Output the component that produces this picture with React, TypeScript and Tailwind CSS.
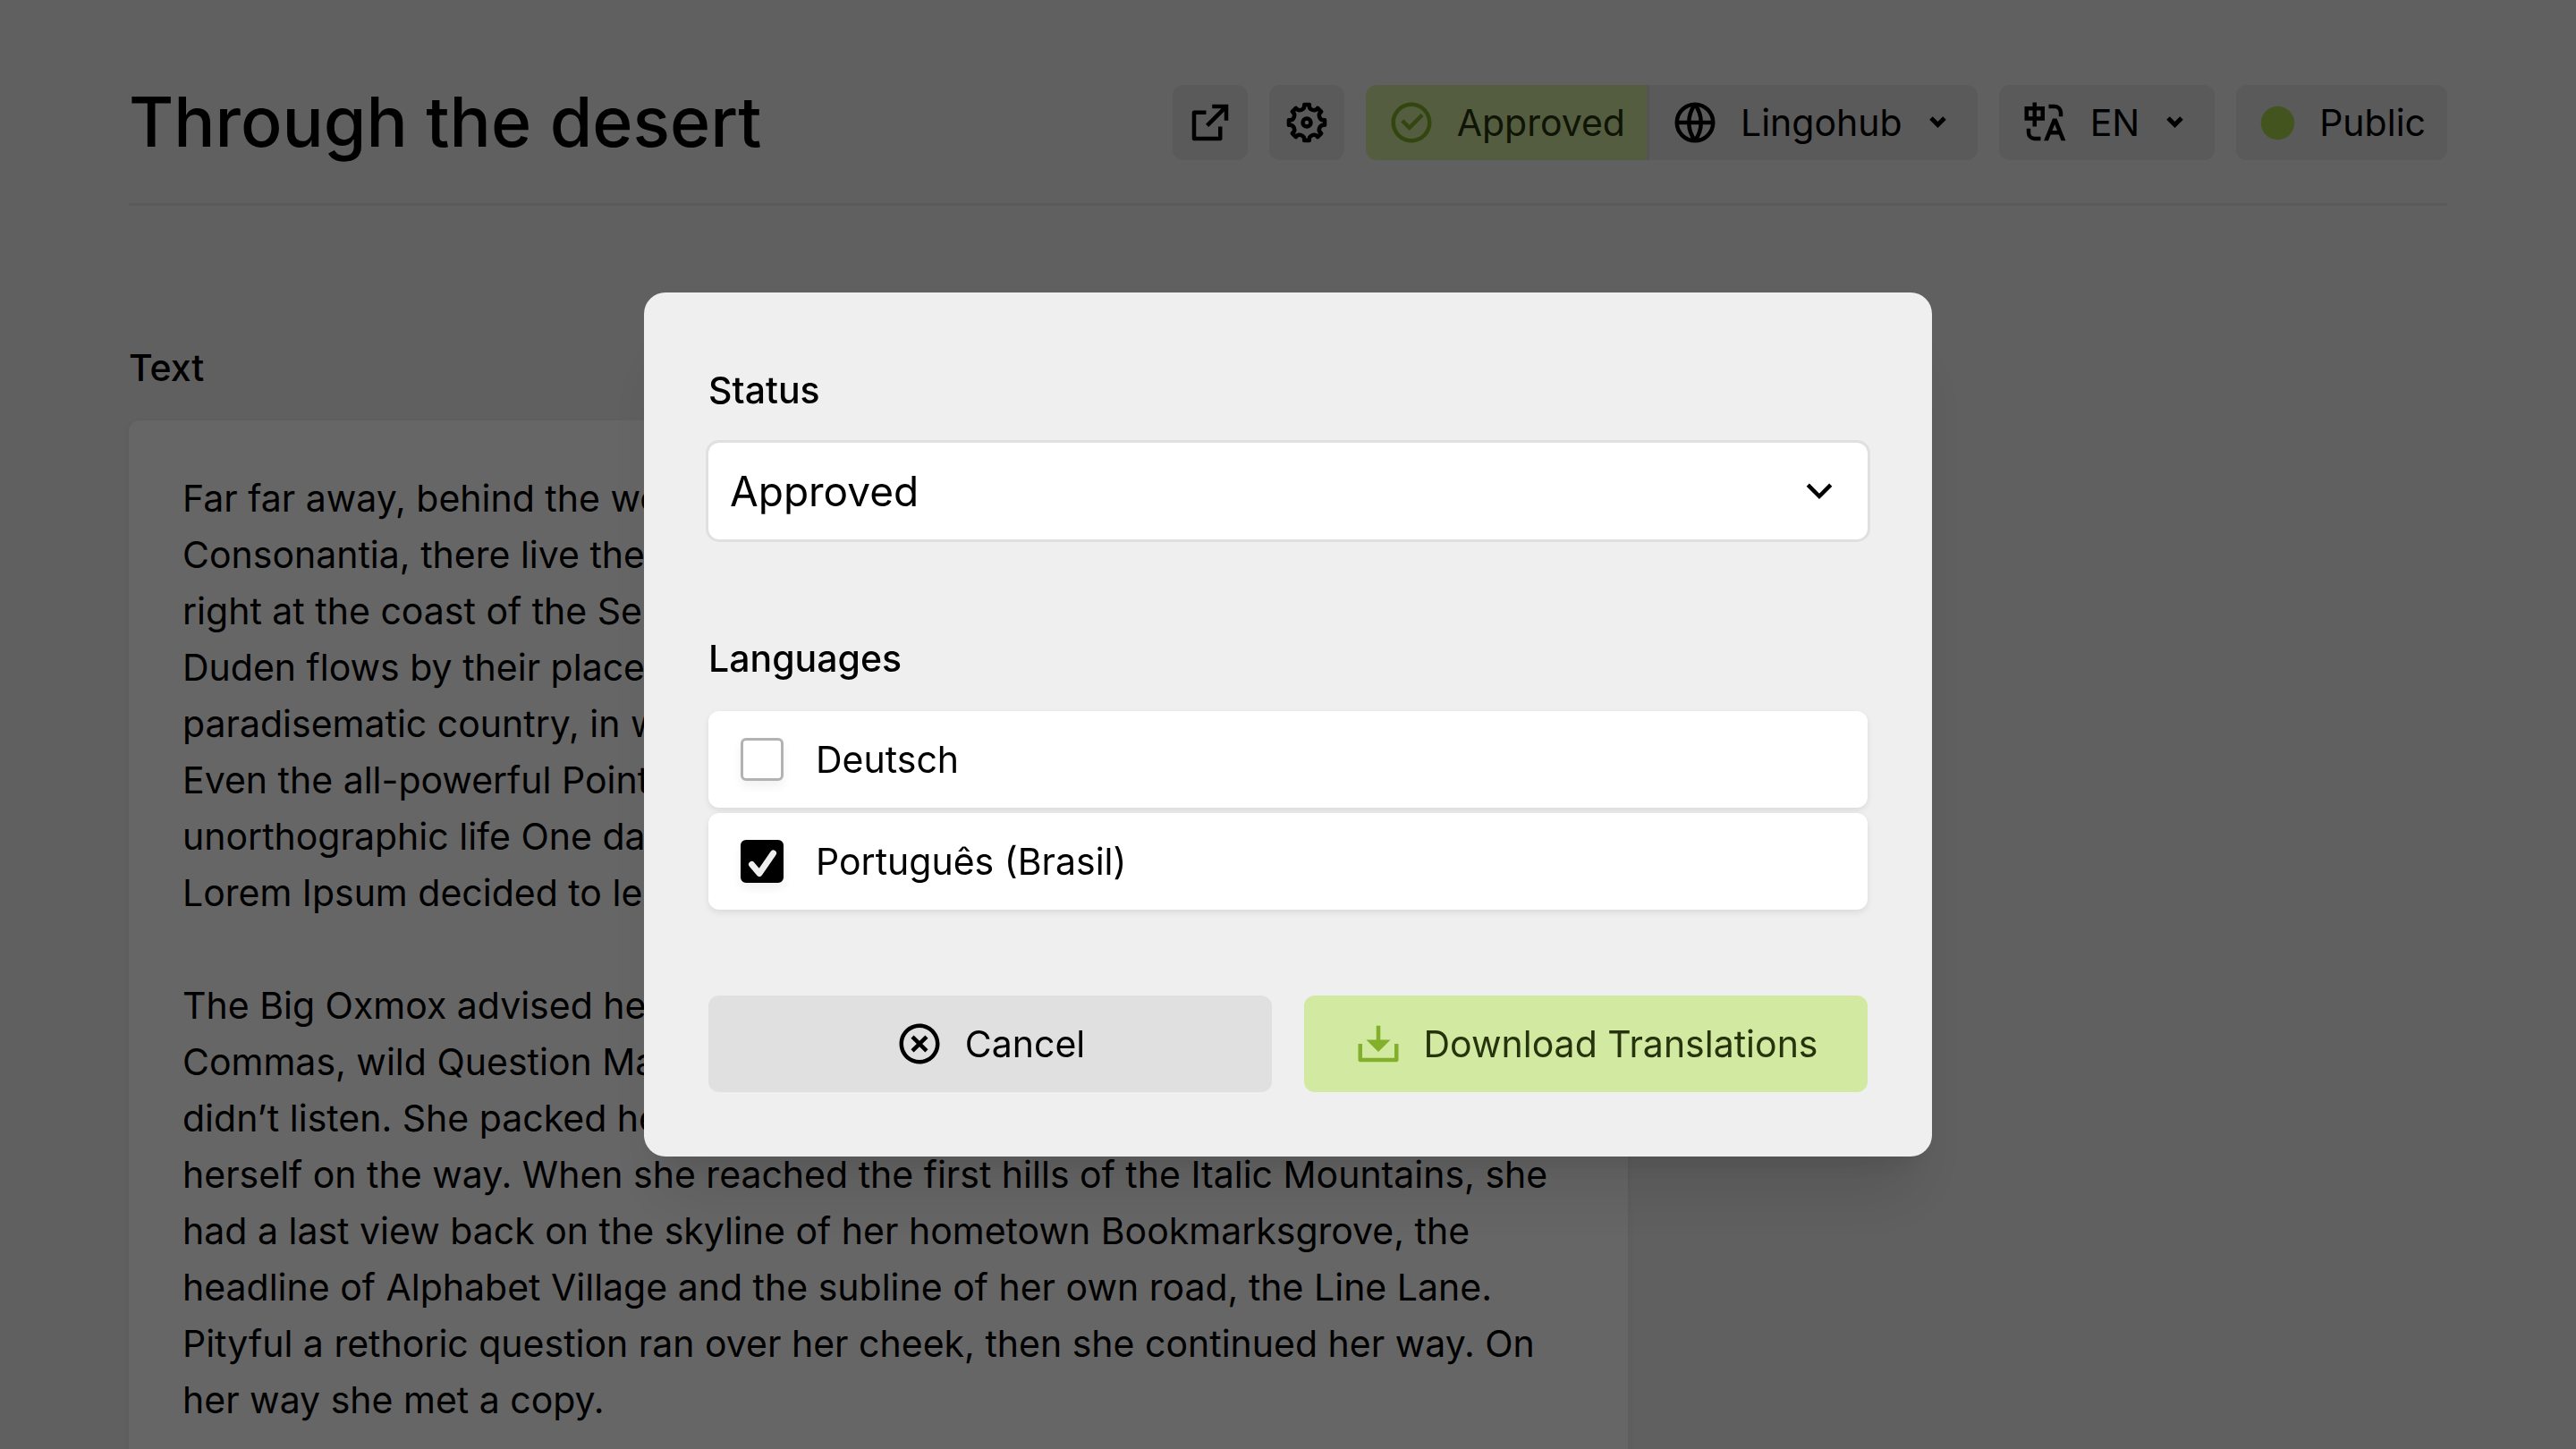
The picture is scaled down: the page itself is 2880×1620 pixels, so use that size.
import { useState } from "react";
import type { ReactNode } from "react";
import {
  RiArrowDownSLine,
  RiCheckboxCircleLine,
  RiCloseCircleLine,
  RiDownload2Line,
  RiExternalLinkLine,
} from "react-icons/ri";

const BODY = `Far far away, behind the word mountains, far from the countries Vokalia and
Consonantia, there live the blind texts. Separated they live in Bookmarksgrove
right at the coast of the Semantics, a large language ocean. A small river named
Duden flows by their place and supplies it with the necessary regelialia. It is a
paradisematic country, in which roasted parts of sentences fly into your mouth.
Even the all-powerful Pointing has no control about the blind texts it is an almost
unorthographic life One day however a small line of blind text by the name of
Lorem Ipsum decided to leave for the far World of Grammar.

The Big Oxmox advised her not to do so, because there were thousands of bad
Commas, wild Question Marks and devious Semikoli, but the Little Blind Text
didn’t listen. She packed her seven versalia, put her initial into the belt and made
herself on the way. When she reached the first hills of the Italic Mountains, she
had a last view back on the skyline of her hometown Bookmarksgrove, the
headline of Alphabet Village and the subline of her own road, the Line Lane.
Pityful a rethoric question ran over her cheek, then she continued her way. On
her way she met a copy.`;

function Icon({ children }: { children: ReactNode }) {
  return (
    <svg
      viewBox="0 0 24 24"
      fill="none"
      stroke="currentColor"
      strokeWidth="2"
      strokeLinejoin="round"
      aria-hidden="true"
      className="size-[54px] shrink-0"
    >
      {children}
    </svg>
  );
}

function GearIcon() {
  return (
    <Icon>
      <path d="M20.91 13.25A2.300 2.300 0 0 0 19.190 17.420L17.420 19.190A2.300 2.300 0 0 0 13.250 20.910L10.750 20.910A2.300 2.300 0 0 0 6.580 19.190L4.810 17.420A2.300 2.300 0 0 0 3.090 13.250L3.090 10.750A2.300 2.300 0 0 0 4.810 6.580L6.580 4.810A2.300 2.300 0 0 0 10.750 3.090L13.250 3.090A2.300 2.300 0 0 0 17.420 4.810L19.190 6.580A2.300 2.300 0 0 0 20.910 10.750Z" />
      <circle cx="12" cy="12" r="2" />
    </Icon>
  );
}

function GlobeIcon() {
  return (
    <Icon>
      <circle cx="12" cy="12" r="9" />
      <path d="M3 12h18M12 3c-4 5.500-4 12.500 0 18M12 3c4 5.500 4 12.500 0 18" />
    </Icon>
  );
}

function TranslateIcon() {
  return (
    <svg viewBox="0 0 24 24" fill="currentColor" aria-hidden="true" className="size-[54px] shrink-0">
      <path d="M5 15v2a2 2 0 0 0 1.850 1.995L7 19h3v2H7a4 4 0 0 1-4-4v-2h2zm13-5 4.400 11h-2.155l-1.201-3h-4.090l-1.199 3h-2.154L16 10h2zm-1 2.885L15.753 16h2.492L17 12.885zM8 2v2h4v7H8v3H6v-3H2V4h4V2h2zm9 1a4 4 0 0 1 4 4v2h-2V7a2 2 0 0 0-2-2h-3V3h3zM6 6H4v3h2V6zm4 0H8v3h2V6z" />
    </svg>
  );
}

function DropdownArrow() {
  return (
    <svg
      viewBox="0 0 36 36"
      fill="none"
      stroke="currentColor"
      strokeWidth="5"
      aria-hidden="true"
      className="size-9 shrink-0"
    >
      <path d="m8 13 7.500 7.500 7.500-7.500" />
    </svg>
  );
}

const headerButton = "flex h-[84px] items-center gap-6 bg-[#e0e0e0]";

function LanguageOption({ name, initial }: { name: string; initial: boolean }) {
  const [checked, setChecked] = useState(initial);
  return (
    <label className="flex h-[108px] items-center gap-9 rounded-xl bg-white px-9 shadow-[0_3px_9px_rgba(0,0,0,0.06),0_3px_6px_rgba(0,0,0,0.03)]">
      <span className="grid size-12 shrink-0">
        <input
          type="checkbox"
          checked={checked}
          onChange={(e) => setChecked(e.target.checked)}
          className="col-start-1 row-start-1 size-12 appearance-none rounded-md border-[3px] border-[#b2b2b2] bg-white shadow-[0_6px_12px_rgba(0,0,0,0.06)] checked:border-black checked:bg-black"
        />
        {checked && (
          <svg
            viewBox="0 0 48 48"
            fill="none"
            stroke="#efefef"
            strokeWidth="7"
            strokeLinecap="round"
            strokeLinejoin="round"
            aria-hidden="true"
            className="pointer-events-none z-10 col-start-1 row-start-1 size-12"
          >
            <path d="m12.500 27.500 8.500 10 15.500-22.500" />
          </svg>
        )}
      </span>
      {name}
    </label>
  );
}

export default function App() {
  const [status, setStatus] = useState("Approved");
  return (
    <div className="h-screen overflow-hidden bg-[#efefef] font-['Inter',sans-serif] text-[41px] leading-[63px] text-black">
      <main className="px-36 pt-[95px]">
        <header className="flex h-[135px] items-start justify-between border-b-[3px] border-[#e0e0e0]">
          <h1 className="text-[77px] leading-[82px] font-medium">Through the desert</h1>
          <div className="flex gap-6">
            <a href="#preview" aria-label="Open preview" className={`${headerButton} rounded-xl px-[15px]`}>
              <RiExternalLinkLine className="size-[54px]" />
            </a>
            <button type="button" aria-label="Settings" className={`${headerButton} rounded-xl px-[15px]`}>
              <GearIcon />
            </button>
            <div className="flex">
              <button
                type="button"
                className="flex h-[84px] items-center gap-6 rounded-l-xl bg-[#d1e9a1] px-6 text-[#26330c]"
              >
                <RiCheckboxCircleLine className="size-[54px] text-[#83b02a]" />
                Approved
              </button>
              <button type="button" className={`${headerButton} rounded-r-xl border-l-[3px] border-[#d2d2d2] px-6`}>
                <GlobeIcon />
                Lingohub
                <DropdownArrow />
              </button>
            </div>
            <button type="button" className={`${headerButton} rounded-xl px-6`}>
              <TranslateIcon />
              EN
              <DropdownArrow />
            </button>
            <button type="button" className={`${headerButton} rounded-xl px-6`}>
              <svg viewBox="0 0 24 24" fill="#aad24e" aria-hidden="true" className="size-[45px]">
                <circle cx="12" cy="12" r="10" />
              </svg>
              Public
            </button>
          </div>
        </header>

        <section className="mt-[150px] grid grid-cols-3 gap-[156px]">
          <div className="col-span-2 flex flex-col gap-[27px]">
            <label htmlFor="text" className="font-medium">
              Text
            </label>
            <textarea
              id="text"
              rows={18}
              readOnly
              value={BODY}
              className="resize-none overflow-hidden rounded-xl bg-white px-[60px] pt-14 whitespace-pre shadow-[0_3px_9px_rgba(0,0,0,0.06)]"
            />
          </div>
        </section>
      </main>

      <div className="fixed inset-0 flex items-center justify-center bg-black/60">
        <form
          role="dialog"
          aria-label="Download translations"
          onSubmit={(e) => e.preventDefault()}
          className="w-1/2 rounded-3xl bg-[#efefef] p-[72px] shadow-[0_60px_75px_-15px_rgba(0,0,0,0.1),0_24px_30px_-18px_rgba(0,0,0,0.1)]"
        >
          <label htmlFor="status" className="block pt-[6px] font-medium">
            Status
          </label>
          <div className="mt-[27px] grid items-center">
            <select
              id="status"
              value={status}
              onChange={(e) => setStatus(e.target.value)}
              className="col-start-1 row-start-1 h-[108px] appearance-none rounded-xl bg-white px-6 text-[46px] outline-[3px] outline-[#e0e0e0]"
            >
              <option>Approved</option>
              <option>Draft</option>
            </select>
            <RiArrowDownSLine className="pointer-events-none col-start-1 row-start-1 mr-[27px] size-[54px] justify-self-end" />
          </div>

          <fieldset className="mt-[102px]">
            <legend className="mb-[27px] font-medium">Languages</legend>
            <div className="flex flex-col gap-[6px]">
              <LanguageOption name="Deutsch" initial={false} />
              <LanguageOption name="Português (Brasil)" initial={true} />
            </div>
          </fieldset>

          <div className="mt-24 grid grid-cols-2 gap-9">
            <button
              type="button"
              className="flex h-[108px] items-center justify-center gap-6 rounded-xl bg-[#e0e0e0]"
            >
              <RiCloseCircleLine className="size-[54px]" />
              Cancel
            </button>
            <button
              type="submit"
              className="flex h-[108px] items-center justify-center gap-6 rounded-xl bg-[#d1e9a1] text-[#26330c]"
            >
              <RiDownload2Line className="size-[54px] text-[#83b02a]" />
              Download Translations
            </button>
          </div>
        </form>
      </div>
    </div>
  );
}
